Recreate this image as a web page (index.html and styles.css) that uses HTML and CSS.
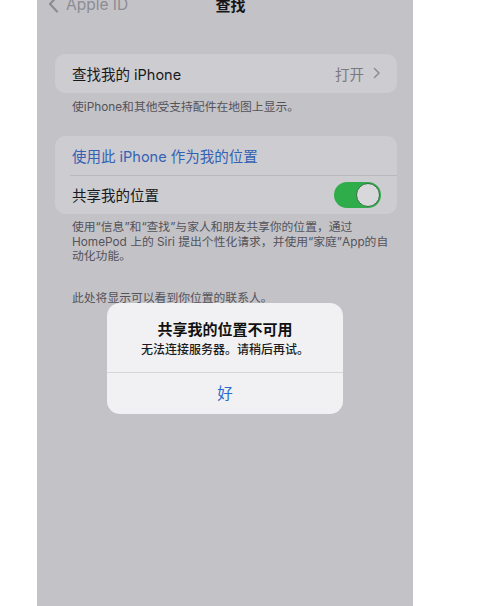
FILE: index.html
```html
<!DOCTYPE html>
<html lang="zh-CN">
<head>
  <meta charset="UTF-8" />
  <title>查找</title>
  <link rel="stylesheet" href="styles.css">
</head>
<body>

  <div class="page">
    <!-- Phone screen, dimmed behind the alert -->
    <div class="screen">

      <!-- Navigation bar -->
      <div class="nav">
        <div class="nav-back">
          <svg class="back-chevron" width="11" height="18" viewBox="0 0 11 18">
            <path d="M9 1.5 L2 9 L9 16.5" fill="none" stroke="#8d8c92" stroke-width="2.2" stroke-linecap="round" stroke-linejoin="round"/>
          </svg>
          <span>Apple ID</span>
        </div>
        <div class="nav-title">查找</div>
        <div></div>
      </div>

      <div class="content">
        <!-- Find My iPhone -->
        <div class="card">
          <div class="row">
            <span class="row-label">查找我的 iPhone</span>
            <span class="row-value">打开
              <svg width="8" height="12" viewBox="0 0 8 12">
                <path d="M1.5 1.5 L6 6 L1.5 10.5" fill="none" stroke="#8f8e94" stroke-width="1.6" stroke-linecap="round" stroke-linejoin="round"/>
              </svg>
            </span>
          </div>
        </div>
        <p class="footnote first">使iPhone和其他受支持配件在地图上显示。</p>

        <!-- Location sharing -->
        <div class="card card-second">
          <div class="row">
            <span class="row-label link">使用此 iPhone 作为我的位置</span>
          </div>
          <div class="row-sep"></div>
          <div class="row">
            <span class="row-label">共享我的位置</span>
            <span class="toggle on"><span class="knob"></span></span>
          </div>
        </div>
        <p class="footnote">使用“信息”和“查找”与家人和朋友共享你的位置，通过<br>HomePod 上的 Siri 提出个性化请求，并使用“家庭”App的自<br>动化功能。</p>

        <p class="footnote contacts">此处将显示可以看到你位置的联系人。</p>
      </div>

      <!-- Alert dialog -->
      <div class="alert">
        <div class="alert-body">
          <div class="alert-title">共享我的位置不可用</div>
          <div class="alert-message">无法连接服务器。请稍后再试。</div>
        </div>
        <div class="alert-button">好</div>
      </div>

    </div>
  </div>

</body>
</html>
```

FILE: styles.css
```css
/* Basic Reset */
* {
  margin: 0;
  padding: 0;
  box-sizing: border-box;
}

body {
  font-family: "Inter", "Noto Sans CJK SC", sans-serif;
  background: #fff;
  width: 480px;
  height: 606px;
  overflow: hidden;
}

.page {
  display: flex;
  height: 606px;
  padding-left: 37px;
}

/* Screen (dimmed) */
.screen {
  position: relative;
  width: 376px;
  height: 100%;
  background: #c3c2c7;
  overflow: hidden;
}

/* Navigation bar */
.nav {
  display: grid;
  grid-template-columns: 1fr auto 1fr;
  align-items: center;
  height: 22px;
  margin-top: -7px;
  padding-left: 11px;
}

.nav-back {
  display: flex;
  align-items: center;
  gap: 7px;
  color: #8d8c92;
  font-size: 15.5px;
}

.nav-title {
  font-size: 15px;
  font-weight: 700;
  color: #151517;
}

/* Content column */
.content {
  padding: 0 16px 0 18px;
}

.card {
  margin-top: 39px;
  background: #cdccd1;
  border-radius: 10px;
}

.card-second {
  margin-top: 22px;
}

.row {
  display: flex;
  align-items: center;
  justify-content: space-between;
  height: 38.5px;
  padding: 0 16px 0 17px;
}

.row-label {
  font-size: 14.5px;
  color: #19191b;
}

.row-label.link {
  color: #3462b3;
}

.row-value {
  display: flex;
  align-items: center;
  gap: 9px;
  font-size: 14.5px;
  color: #7a797f;
}

.row-sep {
  height: 1px;
  margin-left: 15px;
  background: #b9b8bd;
}

/* Switch */
.toggle {
  position: relative;
  width: 47px;
  height: 26px;
  border-radius: 13px;
  background: #2ead4a;
}

.toggle .knob {
  position: absolute;
  top: 1px;
  right: 1px;
  width: 24px;
  height: 24px;
  border-radius: 50%;
  background: #d8d8db;
  border: 1.5px solid #2f6e3d;
}

/* Footnotes under cards */
.footnote {
  padding-left: 17px;
  font-size: 11.8px;
  line-height: 14.5px;
  color: #545359;
  margin-top: 6px;
}

.footnote.first {
  margin-top: 7px;
}

.footnote.contacts {
  margin-top: 27px;
}

/* Alert */
.alert {
  position: absolute;
  top: 303px;
  left: 70px;
  width: 236px;
  background: #f1f1f3;
  border-radius: 13px;
  text-align: center;
}

.alert-body {
  padding: 17px 12px 14px;
  border-bottom: 1px solid #d6d6d9;
}

.alert-title {
  font-size: 15px;
  font-weight: 700;
  line-height: 20px;
  color: #111;
}

.alert-message {
  margin-top: 2px;
  font-size: 12px;
  font-weight: 500;
  line-height: 16px;
  color: #1c1c1e;
}

.alert-button {
  height: 41px;
  line-height: 41px;
  font-size: 15.5px;
  color: #2a6ccb;
}
```
